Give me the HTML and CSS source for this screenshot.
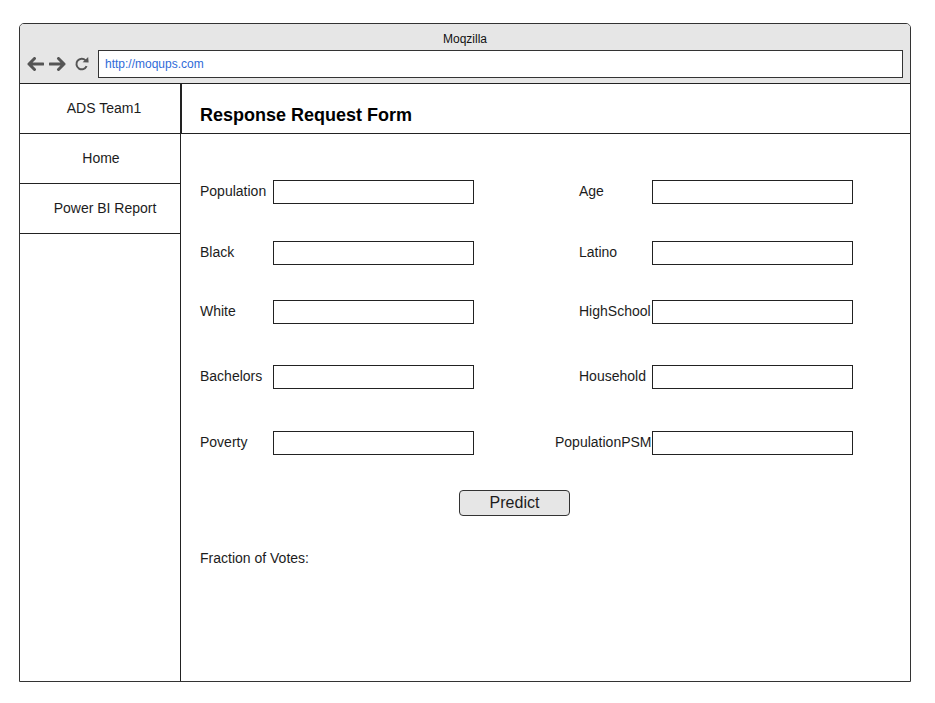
FILE: index.html
```html
<!DOCTYPE html>
<html>
<head>
<meta charset="utf-8">
<title>Response Request Form</title>
<link rel="stylesheet" href="styles.css">
</head>
<body>
<div class="browser">
  <div class="titlebar">
    <div class="title">Moqzilla</div>
    <div class="navrow">
      <div class="navicons">
        <svg class="ico" width="18" height="14" viewBox="0 0 18 14"><path d="M17 7H3M8.5 1.5L3 7l5.5 5.5" fill="none" stroke="#555" stroke-width="3" stroke-linecap="round" stroke-linejoin="round"/></svg>
        <svg class="ico" width="18" height="14" viewBox="0 0 18 14"><path d="M1 7h14M9.5 1.5L15 7l-5.5 5.5" fill="none" stroke="#555" stroke-width="3" stroke-linecap="round" stroke-linejoin="round"/></svg>
        <svg class="ico reload" width="16" height="14" viewBox="0 0 16 14"><path d="M11.6 3.4A5.3 5.3 0 1 0 12.6 9.2" fill="none" stroke="#555" stroke-width="2"/><path d="M8.6 5.2L14.6 5.6 14.2 0Z" fill="#555"/></svg>
      </div>
      <div class="address">http://moqups.com</div>
    </div>
  </div>
  <div class="window">
    <aside class="sidebar">
      <div class="brand">ADS Team1</div>
      <div class="navitem">Home</div>
      <div class="navitem">Power BI Report</div>
    </aside>
    <main class="main">
      <h1 class="heading">Response Request Form</h1>
      <div class="content">
        <div class="row">
          <div class="field"><label class="lbl">Population</label><div class="inp"></div></div>
          <div class="field right"><label class="lbl">Age</label><div class="inp"></div></div>
        </div>
        <div class="row">
          <div class="field"><label class="lbl">Black</label><div class="inp"></div></div>
          <div class="field right"><label class="lbl">Latino</label><div class="inp"></div></div>
        </div>
        <div class="row">
          <div class="field"><label class="lbl">White</label><div class="inp"></div></div>
          <div class="field right"><label class="lbl">HighSchool</label><div class="inp"></div></div>
        </div>
        <div class="row">
          <div class="field"><label class="lbl">Bachelors</label><div class="inp"></div></div>
          <div class="field right"><label class="lbl">Household</label><div class="inp"></div></div>
        </div>
        <div class="row">
          <div class="field"><label class="lbl">Poverty</label><div class="inp"></div></div>
          <div class="field right"><label class="lbl wide">PopulationPSM</label><div class="inp"></div></div>
        </div>
        <div class="btnrow"><button class="predict">Predict</button></div>
        <div class="result">Fraction of Votes:</div>
      </div>
    </main>
  </div>
</div>
</body>
</html>
```
FILE: styles.css
```css
* { box-sizing: border-box; }
html, body { margin: 0; padding: 0; background: #fff; }
body {
  font-family: "Liberation Sans", Arial, sans-serif;
  color: #1c1c1c;
  padding: 23px 0 0 19px;
}
.browser {
  width: 892px;
  height: 659px;
  border: 1px solid #333;
  border-radius: 5px 5px 0 0;
  display: flex;
  flex-direction: column;
  overflow: hidden;
}
.titlebar {
  height: 60px;
  background: #e6e6e6;
  border-bottom: 1px solid #222;
  flex: none;
}
.title {
  text-align: center;
  font-size: 12px;
  line-height: 14px;
  padding-top: 8px;
  color: #111;
}
.navrow {
  display: flex;
  align-items: center;
  margin-top: 4px;
  padding-left: 6px;
}
.navicons {
  display: flex;
  align-items: center;
  gap: 5px;
  width: 72px;
}
.ico { display: block; }
.reload { margin-left: 2px; }
.address {
  width: 805px;
  height: 28px;
  background: #fff;
  border: 1px solid #333;
  font-size: 12px;
  color: #2f6bd8;
  line-height: 26px;
  padding-left: 6px;
}
.window {
  flex: 1;
  display: flex;
  min-height: 0;
}
.sidebar {
  width: 161px;
  border-right: 1px solid #222;
  flex: none;
}
.brand, .navitem {
  height: 50px;
  border-bottom: 1px solid #222;
  font-size: 14px;
  line-height: 48px;
  text-align: center;
  padding-left: 8px;
}
.navitem:nth-child(2) { padding-left: 2px; }
.navitem:nth-child(3) { padding-left: 10px; }
.main {
  flex: 1;
  display: flex;
  flex-direction: column;
}
.heading {
  margin: 0;
  height: 50px;
  border-bottom: 1px solid #222;
  border-left: 1px solid #222;
  font-size: 18px;
  font-weight: bold;
  line-height: 20px;
  padding: 21px 0 0 18px;
  color: #000;
}
.content {
  padding: 46px 0 0 19px;
}
.row {
  display: flex;
  align-items: center;
  height: 24px;
}
.row:nth-child(2) { margin-top: 37px; }
.row:nth-child(3) { margin-top: 35px; }
.row:nth-child(4) { margin-top: 41px; }
.row:nth-child(5) { margin-top: 42px; }
.field {
  display: flex;
  align-items: center;
}
.field.right { margin-left: 105px; }
.lbl {
  width: 73px;
  font-size: 14px;
  line-height: 16px;
  padding-bottom: 2px;
  white-space: nowrap;
}
.lbl.wide {
  width: 97px;
  margin-left: -24px;
}
.inp {
  width: 201px;
  height: 24px;
  border: 1px solid #222;
  background: #fff;
}
.btnrow {
  margin-top: 35px;
  padding-left: 259px;
}
.predict {
  display: block;
  width: 111px;
  height: 26px;
  background: #e6e6e6;
  border: 1px solid #333;
  border-radius: 4px;
  font-family: "Liberation Sans", Arial, sans-serif;
  font-size: 16px;
  color: #1c1c1c;
  padding: 0;
  line-height: 22px;
}
.result {
  margin-top: 34px;
  font-size: 14px;
  line-height: 16px;
}
```
